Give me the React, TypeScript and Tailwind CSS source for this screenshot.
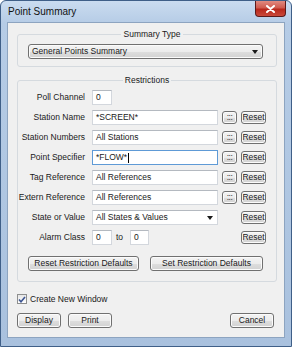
import React from 'react';

const Btn = ({ label, className = '' }: { label: string; className?: string }) => (
  <button className={`flex items-center justify-center rounded-[3px] border border-[#707070] bg-[linear-gradient(#f3f3f3_0%,#ececec_50%,#dedede_51%,#d2d2d2_100%)] shadow-[inset_0_0_0_1px_#fbfbfb] text-[#1a1a1a] leading-none ${className}`}>
    {label}
  </button>
);

const Field = ({ value, className = '', focused = false }: { value: string; className?: string; focused?: boolean }) => (
  <div
    className={`flex h-[15px] items-center bg-white px-[3px] border ${
      focused ? 'border-[#5e9ad6]' : 'border-[#d3d7dd] border-t-[#b4b9c0]'
    } ${className}`}
  >
    <span>{value}</span>
    {focused && <span className="ml-px h-[10px] w-px bg-black" />}
  </div>
);

const Arrow = () => (
  <svg width="6" height="4" viewBox="0 0 6 4">
    <path d="M0 0h6L3 4z" fill="#1a1a1a" />
  </svg>
);

const rows = [
  { label: 'Station Name', value: '*SCREEN*' },
  { label: 'Station Numbers', value: 'All Stations' },
  { label: 'Point Specifier', value: '*FLOW*', focused: true },
  { label: 'Tag Reference', value: 'All References' },
  { label: 'Extern Reference', value: 'All References' },
];

const App = () => {
  return (
    <div className="w-[292px] h-[347px] flex flex-col rounded-t-[6px] border border-[#3f5f88] bg-[linear-gradient(#cadcf0_0px,#b6cce6_22px,#a9c1de_100%)] font-['Liberation_Sans',Arial,sans-serif] text-[8.5px] text-[#1a1a1a]">
      {/* title bar */}
      <div className="flex h-[21px] items-start justify-between">
        <div className="pl-[7px] pt-[5px] text-[10px] leading-[11px] text-[#111]">Point Summary</div>
        <div className="mr-[5px] flex h-[16px] w-[31px] items-center justify-center rounded-b-[4px] border border-t-0 border-[#5b1a1a] bg-[linear-gradient(#e08a80_0%,#cf5b4f_45%,#b8281c_55%,#c9493a_100%)]">
          <svg width="9" height="8" viewBox="0 0 9 8">
            <path d="M1 1l7 6M8 1L1 7" stroke="#fff" strokeWidth="2" strokeLinecap="round" />
          </svg>
        </div>
      </div>

      {/* client */}
      <div className="mx-[6px] h-[316px] border border-[#8da4c0] bg-[#f0f0f0] flex flex-col">
        <fieldset className="ml-[9px] mt-[6px] w-[260px] rounded-[3px] border border-[#d5dadf] pb-[7px] pl-[10px] pt-[5px]">
          <legend className="mx-auto px-[2px] leading-[10px]">Summary Type</legend>
          <div className="flex h-[15px] w-[235px] items-center justify-between rounded-[3px] border border-[#707070] bg-[linear-gradient(#f3f3f3_0%,#ececec_50%,#dedede_51%,#d2d2d2_100%)] pl-[3px] pr-[4px] shadow-[inset_0_0_0_1px_#fbfbfb]">
            <span>General Points Summary</span>
            <Arrow />
          </div>
        </fieldset>

        <fieldset className="ml-[9px] mt-[8px] w-[260px] rounded-[3px] border border-[#d5dadf] pb-[10px] pt-[5px]">
          <legend className="mx-auto px-[2px] leading-[10px]">Restrictions</legend>
          <div className="grid grid-cols-[70px_126px_15px_25px] items-center gap-x-[4px] gap-y-[5px]">
            <div className="pr-[3px] text-right">Poll Channel</div>
            <Field value="0" className="w-[20px]" />
            <div />
            <div />

            {rows.map((r) => (
              <React.Fragment key={r.label}>
                <div className="pr-[3px] text-right whitespace-nowrap">{r.label}</div>
                <Field value={r.value} focused={r.focused} />
                <Btn label=":::" className="h-[13px] text-[#333] tracking-[-0.5px]" />
                <Btn label="Reset" className="h-[13px]" />
              </React.Fragment>
            ))}

            <div className="pr-[3px] text-right">State or Value</div>
            <div className="flex h-[15px] items-center justify-between border border-[#d3d7dd] border-t-[#b4b9c0] bg-white pl-[3px] pr-[4px]">
              <span>All States &amp; Values</span>
              <Arrow />
            </div>
            <div />
            <Btn label="Reset" className="h-[13px]" />

            <div className="pr-[3px] text-right">Alarm Class</div>
            <div className="flex items-center">
              <Field value="0" className="w-[20px]" />
              <span className="ml-[4px]">to</span>
              <Field value="0" className="ml-[7px] w-[19px]" />
            </div>
            <div />
            <Btn label="Reset" className="h-[13px]" />
          </div>

          <div className="mt-[11px] flex gap-[11px] pl-[10px]">
            <Btn label="Reset Restriction Defaults" className="h-[15px] w-[111px]" />
            <Btn label="Set Restriction Defaults" className="h-[15px] w-[113px]" />
          </div>
        </fieldset>

        <div className="ml-[9px] mt-[11px] flex items-center gap-[3px]">
          <div className="flex h-[10px] w-[10px] items-center justify-center border border-[#8e8f8f] bg-[linear-gradient(#e6e6e6,#ffffff)]">
            <svg width="8" height="7" viewBox="0 0 8 7">
              <path d="M1 3.5l2 2.3L7 1" stroke="#3d5592" strokeWidth="1.6" fill="none" />
            </svg>
          </div>
          <span>Create New Window</span>
        </div>

        <div className="mx-[9px] mt-[7px] flex items-center">
          <Btn label="Display" className="h-[15px] w-[44px]" />
          <Btn label="Print" className="ml-[7px] h-[15px] w-[44px]" />
          <Btn label="Cancel" className="ml-auto mr-[1px] h-[15px] w-[44px]" />
        </div>
      </div>
    </div>
  );
};

export default App;
